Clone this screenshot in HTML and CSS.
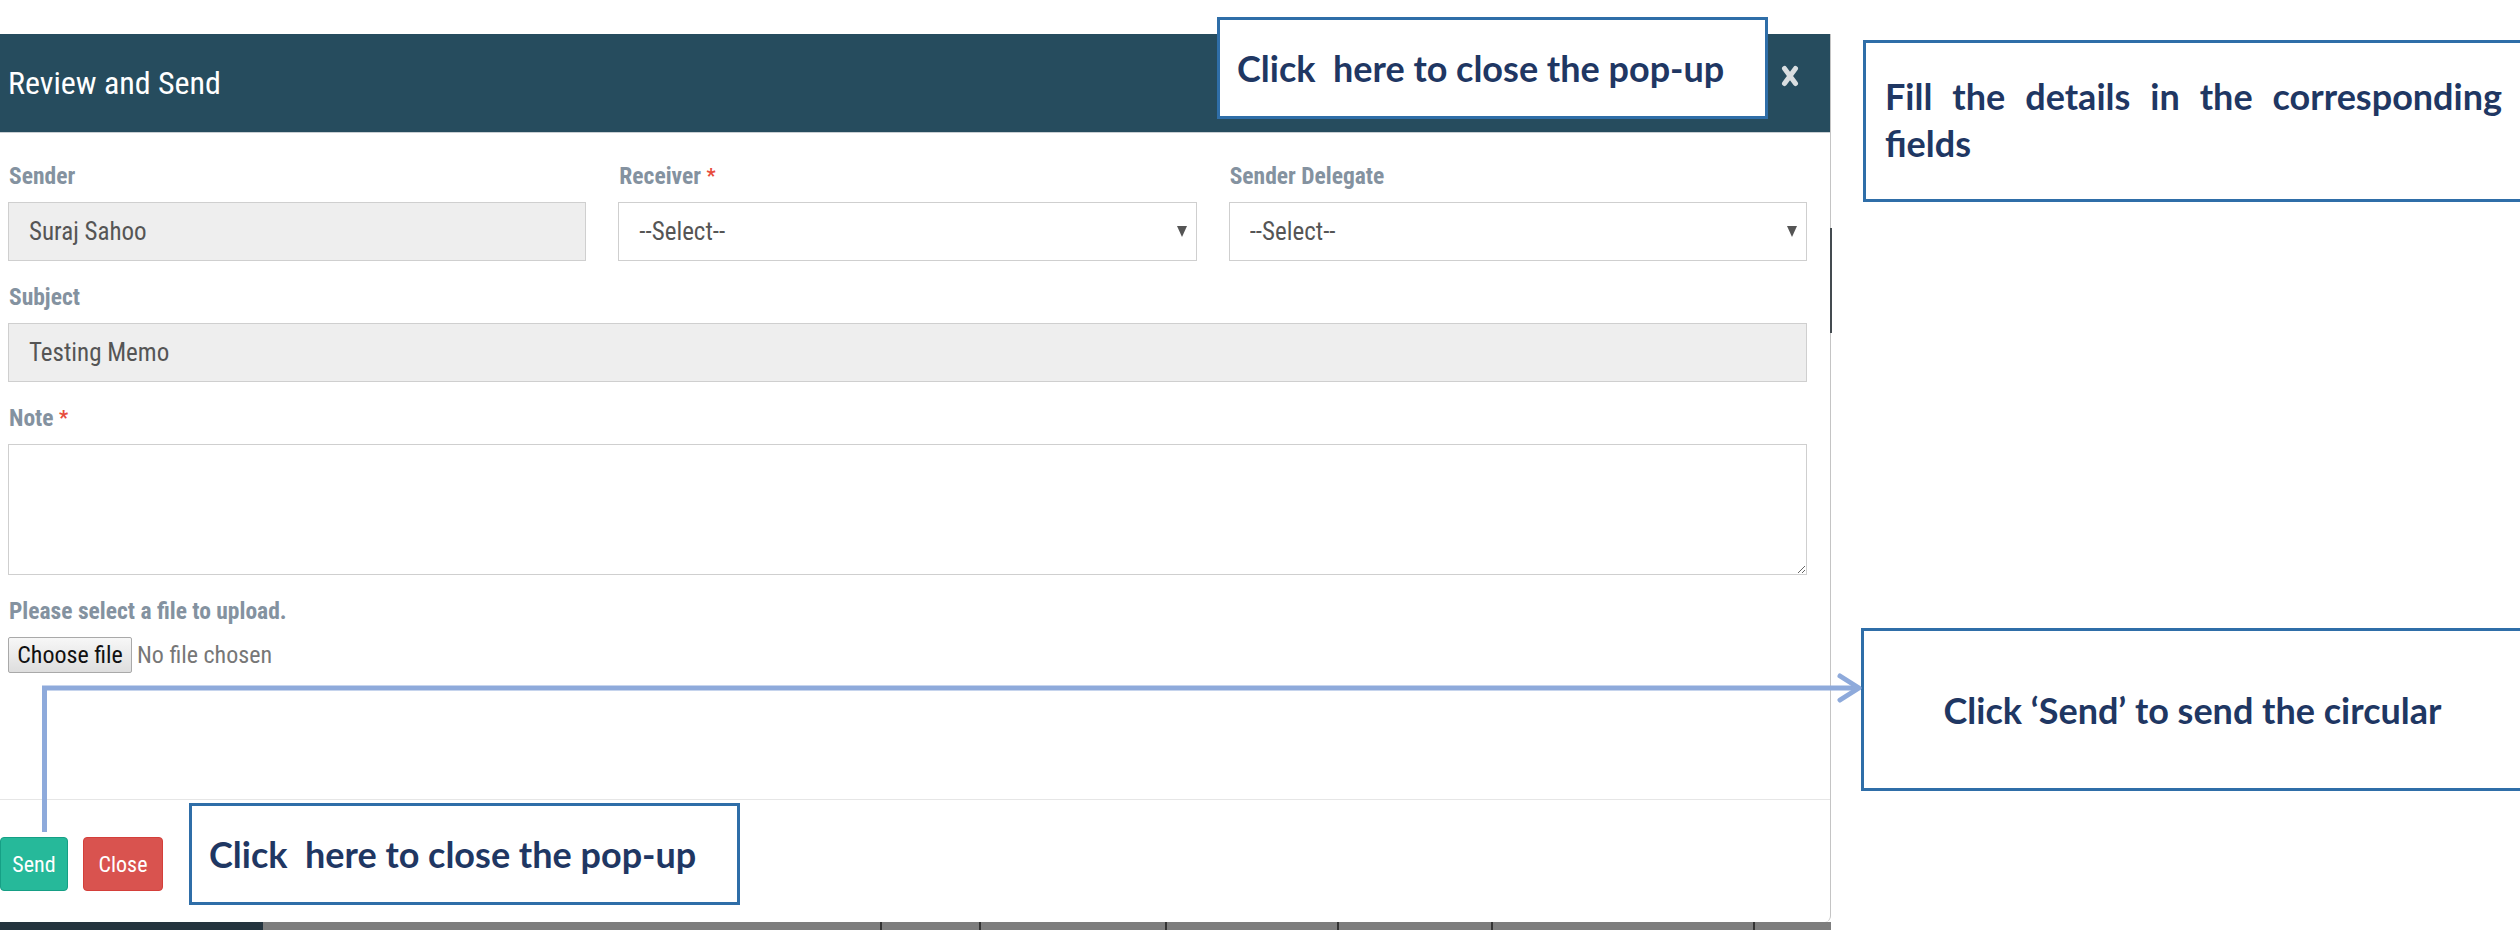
FILE: index.html
```html
<!DOCTYPE html>
<html lang="en">
<head>
<meta charset="utf-8">
<title>Review and Send</title>
<link rel="stylesheet" href="styles.css">
</head>
<body>
<div class="page">
  <div class="modal">
    <div class="modal-header">
      <h4 class="modal-title">Review and Send</h4>
      <button class="close-x" aria-label="Close">
        <svg width="18" height="22" viewBox="0 0 18 22"><path d="M3.5 3.5 L14.5 18.5 M14.5 3.5 L3.5 18.5" stroke="#d9dee1" stroke-width="5" stroke-linecap="round"/></svg>
      </button>
    </div>
    <div class="modal-body">
      <div class="row3">
        <div class="group">
          <label class="lbl">Sender</label>
          <input class="control ro" type="text" value="Suraj Sahoo" readonly>
        </div>
        <div class="group">
          <label class="lbl">Receiver <span class="req">*</span></label>
          <div class="select-wrap"><select class="control sel"><option>--Select--</option></select></div>
        </div>
        <div class="group">
          <label class="lbl">Sender Delegate</label>
          <div class="select-wrap"><select class="control sel"><option>--Select--</option></select></div>
        </div>
      </div>
      <div class="group">
        <label class="lbl">Subject</label>
        <input class="control ro" type="text" value="Testing Memo" readonly>
      </div>
      <div class="group">
        <label class="lbl">Note <span class="req">*</span></label>
        <textarea class="control area"></textarea>
      </div>
      <div class="group last">
        <label class="lbl">Please select a file to upload.</label>
        <div class="file"><span class="file-btn">Choose file</span><span class="file-none">No file chosen</span></div>
      </div>
    </div>
    <div class="modal-footer">
      <button class="btn btn-send">Send</button>
      <button class="btn btn-close">Close</button>
    </div>
    <div class="scroll-mark"></div>
  </div>
  <div class="strip">
    <span class="seg dark"></span>
    <span class="seg s1"></span>
    <span class="seg s2"></span>
    <span class="seg s3"></span>
    <span class="seg s4"></span>
    <span class="seg s5"></span>
    <span class="seg s6"></span>
    <span class="seg s7"></span>
  </div>

  <div class="callout callout-top">Click&nbsp; here to close the pop-up</div>
  <div class="callout callout-bottom">Click&nbsp; here to close the pop-up</div>
  <div class="callout callout-fill">Fill the details in the corresponding fields</div>
  <div class="callout callout-send">Click ‘Send’ to send the circular</div>

  <svg class="connector" width="1870" height="170" viewBox="0 0 1870 170">
    <path d="M44.5 18 L44.5 162" stroke="#8eaadb" stroke-width="5" fill="none"/>
    <path d="M42 18 L1858 18" stroke="#8eaadb" stroke-width="5" fill="none"/>
    <path d="M1840 6 L1859 18 L1840 30" stroke="#8eaadb" stroke-width="5" fill="none" stroke-linecap="round" stroke-linejoin="round"/>
  </svg>
</div>
</body>
</html>
```

FILE: styles.css
```css
html, body {
  margin: 0;
  padding: 0;
  background: #ffffff;
}

body {
  width: 2520px;
  height: 930px;
  overflow: hidden;
}

.page {
  position: relative;
  width: 2520px;
  height: 930px;
  padding-top: 34px;
  box-sizing: border-box;
  font-family: "Roboto Condensed", "Liberation Sans Narrow", "DejaVu Sans Condensed", "Liberation Sans", Arial, sans-serif;
  font-stretch: condensed;
}

/* ---------- modal ---------- */
.modal {
  position: relative;
  width: 1831px;
  height: 888px;
  box-sizing: border-box;
  background: #ffffff;
  border-right: 1px solid #c4c4c4;
  border-bottom-right-radius: 6px;
  display: flex;
  flex-direction: column;
}

.modal-header {
  height: 98px;
  background: #264c5e;
  border-bottom: 1px solid #c9cfd3;
  display: flex;
  align-items: center;
  justify-content: space-between;
  padding-left: 8px;
}

.modal-title {
  margin: 0;
  font-weight: normal;
  font-size: 32px;
  color: #ffffff;
}

.close-x {
  border: 0;
  background: transparent;
  padding: 0;
  width: 18px;
  height: 22px;
  margin-right: 31px;
  margin-bottom: 14px;
  display: flex;
}

.modal-body {
  padding: 29px 23px 0 8px;
  flex: 1;
}

.row3 {
  display: grid;
  grid-template-columns: repeat(3, 1fr);
  column-gap: 32px;
}

.group {
  display: flex;
  flex-direction: column;
  margin-bottom: 22px;
}

.group.last {
  margin-bottom: 0;
}

.lbl {
  display: block;
  font-size: 23.5px;
  line-height: 28px;
  font-weight: bold;
  color: #8492a0;
  margin-bottom: 12px;
  padding-left: 1px;
}

.req {
  color: #e74c3c;
  font-size: 20px;
  vertical-align: top;
}

.control {
  box-sizing: border-box;
  width: 100%;
  height: 59px;
  border: 1px solid #cfcfcf;
  background: #ffffff;
  font-family: inherit;
  font-stretch: condensed;
  font-size: 25px;
  color: #555555;
  padding: 0 20px;
  margin: 0;
  border-radius: 0;
  outline: none;
}

.control.ro {
  background: #eeeeee;
}

.select-wrap {
  position: relative;
}

.select-wrap::after {
  content: "";
  position: absolute;
  right: 10px;
  top: 24px;
  width: 0;
  height: 0;
  border-left: 5px solid transparent;
  border-right: 5px solid transparent;
  border-top: 11px solid #555555;
  pointer-events: none;
}

.control.sel {
  -webkit-appearance: none;
  appearance: none;
}

.control.area {
  height: 131px;
  resize: vertical;
  padding: 10px 20px;
  display: block;
}

.file {
  display: flex;
  align-items: center;
  height: 36px;
}

.file-btn {
  box-sizing: border-box;
  height: 36px;
  width: 124px;
  display: flex;
  align-items: center;
  justify-content: center;
  border: 1px solid #a9a9a9;
  border-radius: 2px;
  background: linear-gradient(#f7f7f7, #dedede);
  font-size: 24px;
  color: #111111;
}

.file-none {
  font-size: 24px;
  color: #777777;
  margin-left: 5px;
}

.modal-footer {
  height: 123px;
  box-sizing: border-box;
  border-top: 1px solid #e6e6e6;
  padding-top: 37px;
  display: flex;
  align-items: flex-start;
  gap: 15px;
}

.btn {
  height: 54px;
  border-radius: 4px;
  font-family: inherit;
  font-stretch: condensed;
  font-size: 22px;
  color: #ffffff;
  padding: 0;
  cursor: pointer;
}

.btn-send {
  width: 68px;
  background: #26b99a;
  border: 1px solid #169f85;
}

.btn-close {
  width: 80px;
  background: #d9534f;
  border: 1px solid #d43f3a;
}

.scroll-mark {
  position: absolute;
  right: -2px;
  top: 194px;
  width: 2px;
  height: 105px;
  background: #444b50;
}

/* ---------- page behind the modal ---------- */
.strip {
  width: 1831px;
  height: 8px;
  display: flex;
  background: #7d7d7d;
}

.seg {
  height: 8px;
  box-sizing: border-box;
  border-left: 2px solid #333333;
}

.seg.dark { width: 263px; background: #24343e; border-left: 0; }
.seg.s1 { width: 617px; border-left: 0; }
.seg.s2 { width: 99px; }
.seg.s3 { width: 186px; }
.seg.s4 { width: 172px; }
.seg.s5 { width: 154px; }
.seg.s6 { width: 262px; }
.seg.s7 { width: 78px; }

/* ---------- annotation callouts ---------- */
.callout {
  position: absolute;
  box-sizing: border-box;
  background: #ffffff;
  border: 3px solid #2f6ea8;
  font-family: Lato, "Open Sans", sans-serif;
  font-stretch: normal;
  font-weight: bold;
  font-size: 36px;
  color: #1f3763;
  white-space: nowrap;
}

.callout-top,
.callout-bottom {
  width: 551px;
  display: flex;
  align-items: center;
  padding-left: 17px;
}

.callout-top {
  left: 1217px;
  top: 17px;
  height: 102px;
}

.callout-bottom {
  left: 189px;
  top: 803px;
  height: 102px;
}

.callout-fill {
  left: 1863px;
  top: 40px;
  width: 661px;
  height: 162px;
  padding: 30px 19px 0 19px;
  line-height: 47px;
  white-space: normal;
  text-align: justify;
}

.callout-send {
  left: 1861px;
  top: 628px;
  width: 663px;
  height: 163px;
  display: flex;
  align-items: center;
  justify-content: center;
}

.connector {
  position: absolute;
  left: 0;
  top: 670px;
  overflow: visible;
}
```
